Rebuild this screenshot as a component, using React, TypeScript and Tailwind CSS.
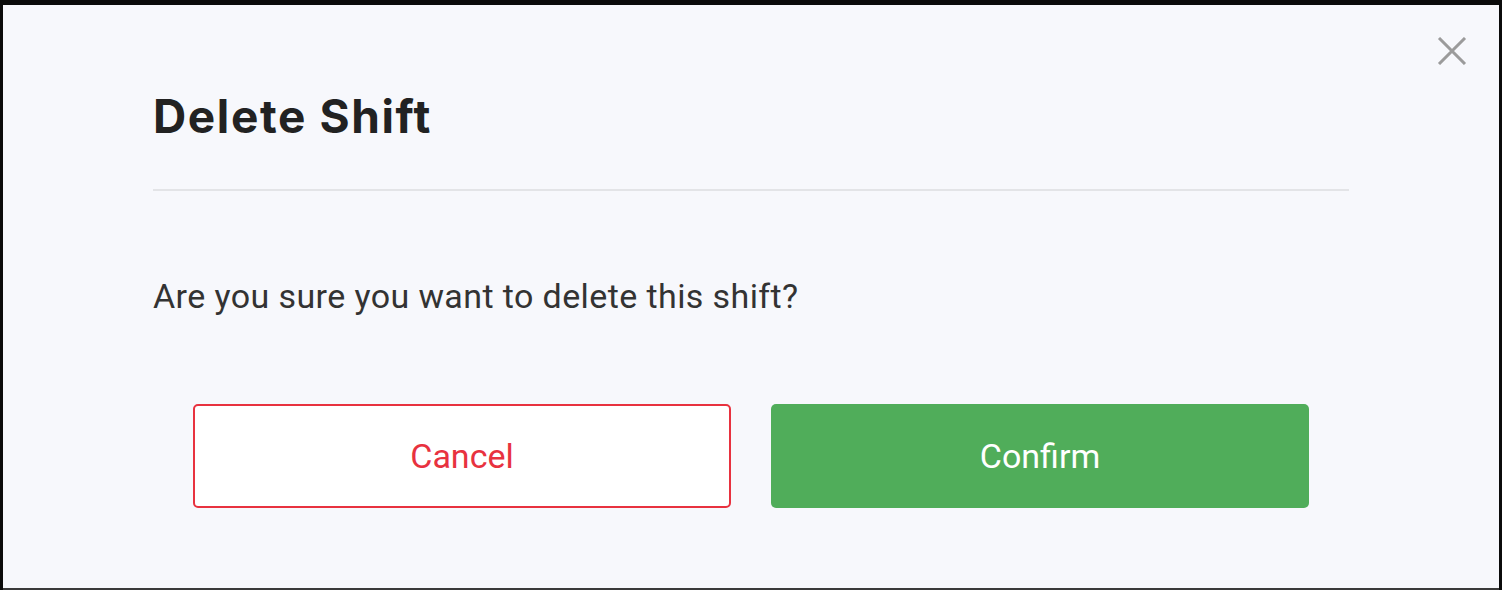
export default function App() {
  return (
    <div className="flex h-[590px] w-full flex-col bg-[#0b0b0b] pl-[3px] pr-[3px] pt-[5px]">
      <div className="relative flex flex-1 flex-col bg-[#f7f8fc] pl-[150px] pr-[150px] font-['Roboto',sans-serif]">
        <button
          type="button"
          className="absolute right-[32px] top-[32px] text-[#9b9b9b]"
          aria-label="Close"
        >
          <svg width="30" height="28" viewBox="0 0 30 28" fill="none" stroke="currentColor" strokeWidth="3">
            <path d="M2 1 L28 27 M28 1 L2 27" />
          </svg>
        </button>

        <h2 className="mt-[83px] font-['Inter',sans-serif] text-[46px] font-bold leading-[56px] tracking-[0.035em] text-[#222222]">
          Delete Shift
        </h2>

        <div className="mt-[45px] h-[2px] bg-[#e3e4e7]" />

        <p className="mt-[85px] text-[34px] leading-[40px] tracking-[0.4px] text-[#333333]">
          Are you sure you want to delete this shift?
        </p>

        <div className="mt-[88px] flex gap-[40px] px-[40px]">
          <button
            type="button"
            className="flex h-[104px] w-[538px] items-center justify-center rounded-[5px] border-2 border-[#e8323f] bg-white text-[34px] text-[#e8323f]"
          >
            Cancel
          </button>
          <button
            type="button"
            className="flex h-[104px] w-[538px] items-center justify-center rounded-[5px] bg-[#50ad5a] text-[34px] text-white"
          >
            Confirm
          </button>
        </div>
      </div>
      <div className="h-[2px] bg-[#3a3a3a]" />
    </div>
  );
}
